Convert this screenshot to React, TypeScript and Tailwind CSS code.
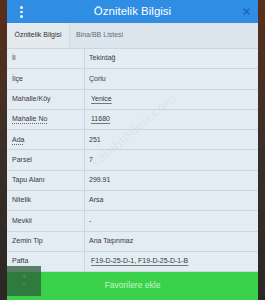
import React from "react";

type Row = { label: string; value: string; labelLink?: boolean; valueLink?: boolean };

const ROWS: Row[] = [
  { label: "İl", value: "Tekirdağ" },
  { label: "İlçe", value: "Çorlu" },
  { label: "Mahalle/Köy", value: "Yenice", valueLink: true },
  { label: "Mahalle No", value: "11680", labelLink: true, valueLink: true },
  { label: "Ada", value: "251", labelLink: true },
  { label: "Parsel", value: "7" },
  { label: "Tapu Alanı", value: "299.91" },
  { label: "Nitelik", value: "Arsa" },
  { label: "Mevkii", value: "-" },
  { label: "Zemin Tip", value: "Ana Taşınmaz" },
  { label: "Pafta", value: "F19-D-25-D-1, F19-D-25-D-1-B", valueLink: true },
];

export default function App() {
  return (
    <div
      className="relative h-[300px] w-[265px] overflow-hidden bg-gradient-to-b from-[#5a2e1a] via-[#3a2f28] to-[#2a2724]"
      style={{ fontFamily: '"Liberation Sans", Arial, sans-serif' }}
    >
      <div className="mx-[7px] flex h-full w-[251px] flex-col">
        {/* header */}
        <div className="relative flex h-[23px] shrink-0 items-center justify-center bg-[#2f8de4]">
          <div className="absolute left-[13px] top-[6px] flex flex-col gap-[2px]">
            <span className="h-[2.5px] w-[2.5px] rounded-full bg-white" />
            <span className="h-[2.5px] w-[2.5px] rounded-full bg-white" />
            <span className="h-[2.5px] w-[2.5px] rounded-full bg-white" />
          </div>
          <span className="text-[11.5px] leading-none text-white">Öznitelik Bilgisi</span>
          <svg
            className="absolute right-[8px] top-[8px]"
            width="7"
            height="7"
            viewBox="0 0 7 7"
            fill="none"
          >
            <path d="M1 1L6 6M6 1L1 6" stroke="#2165b3" strokeWidth="1.5" strokeLinecap="round" />
          </svg>
        </div>

        {/* tabs */}
        <div className="flex h-[26px] shrink-0 border-b border-[#ccd5dd] bg-[#dde5ec] text-[7px] text-[#555]">
          <div className="flex w-[63px] items-center justify-center border-r border-[#d3dbe2] bg-[#e2e9ef] text-[#333]">
            Öznitelik Bilgisi
          </div>
          <div className="flex items-center pl-[6px] text-[#5b6e80]">Bina/BB Listesi</div>
        </div>

        {/* table */}
        <div className="flex flex-col bg-[#e3ebf3] text-[7px] text-[#3a3a3a]">
          {ROWS.map((r) => (
            <div key={r.label} className="flex h-[20.3px] border-b border-[#cdd6de]">
              <div className="flex w-[78px] items-center border-r border-[#cdd6de] pl-[5px]">
                <span
                  className={
                    r.labelLink ? "underline decoration-dotted decoration-[#667] underline-offset-2" : ""
                  }
                >
                  {r.label}
                </span>
              </div>
              <div className="flex flex-1 items-center pl-[4px]">
                <span
                  className={
                    r.valueLink
                      ? "ml-[2px] underline decoration-[#777] underline-offset-2"
                      : ""
                  }
                >
                  {r.value}
                </span>
              </div>
            </div>
          ))}
        </div>

        {/* button */}
        <div className="flex flex-1 items-center justify-center bg-[#3bd24b] pb-[2px] text-[8.5px] text-[#c9f2cc]">
          Favorilere ekle
        </div>
      </div>

      {/* watermark */}
      <div className="pointer-events-none absolute left-[80px] top-[120px] -rotate-[40deg] text-[14px] font-bold text-black/[0.035]">
        sahibinden.com
      </div>

      {/* map control overlay */}
      <div className="absolute left-[7px] top-[266px] flex h-[30px] w-[34px] flex-col items-center justify-center bg-[#2c5c38]/75 text-[8px] leading-none text-white/25">
        <span>+</span>
        <span>−</span>
      </div>
    </div>
  );
}
